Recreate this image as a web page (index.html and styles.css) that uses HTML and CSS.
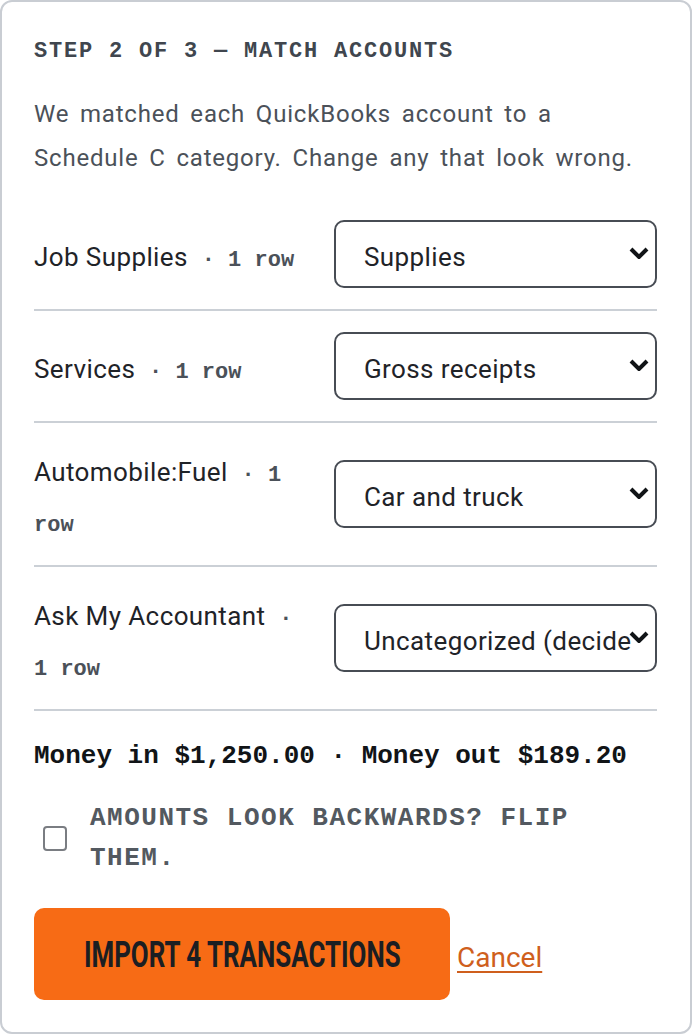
FILE: index.html
```html
<!DOCTYPE html>
<html lang="en">
<head>
<meta charset="utf-8">
<title>Match accounts</title>
<link rel="stylesheet" href="styles.css">
</head>
<body>
<main class="card">
  <h2 class="step">Step 2 of 3 — Match accounts</h2>
  <p class="intro">We matched each QuickBooks account to a Schedule C category. Change any that look wrong.</p>

  <div class="rows">
    <div class="row">
      <div class="label">Job Supplies <span class="meta dot">· </span><span class="meta">1 </span><span class="meta">row</span></div>
      <div class="pick">
        <select class="cat"><option>Supplies</option></select>
        <svg class="chev" viewBox="0 0 20 12" aria-hidden="true"><polyline points="2,2 10,10 18,2"/></svg>
      </div>
    </div>
    <div class="row">
      <div class="label">Services <span class="meta dot">· </span><span class="meta">1 </span><span class="meta">row</span></div>
      <div class="pick">
        <select class="cat"><option>Gross receipts</option></select>
        <svg class="chev" viewBox="0 0 20 12" aria-hidden="true"><polyline points="2,2 10,10 18,2"/></svg>
      </div>
    </div>
    <div class="row">
      <div class="label">Automobile:Fuel <span class="meta dot">· </span><span class="meta">1 </span><span class="meta">row</span></div>
      <div class="pick">
        <select class="cat"><option>Car and truck</option></select>
        <svg class="chev" viewBox="0 0 20 12" aria-hidden="true"><polyline points="2,2 10,10 18,2"/></svg>
      </div>
    </div>
    <div class="row">
      <div class="label">Ask My Accountant <span class="meta dot">· </span><span class="meta">1 </span><span class="meta">row</span></div>
      <div class="pick">
        <select class="cat"><option>Uncategorized (decide later)</option></select>
        <svg class="chev" viewBox="0 0 20 12" aria-hidden="true"><polyline points="2,2 10,10 18,2"/></svg>
      </div>
    </div>
  </div>

  <p class="totals">Money in $1,250.00 · Money out $189.20</p>

  <label class="flip">
    <input type="checkbox" class="box">
    <span class="flip-text">Amounts look backwards? Flip them.</span>
  </label>

  <div class="actions">
    <button class="import" type="button"><span class="import-text">Import 4 transactions</span></button>
    <a class="cancel" href="#">Cancel</a>
  </div>
</main>
</body>
</html>
```

FILE: styles.css
```css
html, body {
  margin: 0;
  padding: 0;
  background: #ffffff;
}

.card {
  box-sizing: border-box;
  width: 692px;
  min-height: 1034px;
  border: 2px solid #c9cdd3;
  border-radius: 12px;
  padding: 37px 33px 30px 32px;
  font-family: Roboto, "Liberation Sans", sans-serif;
  color: #1f2328;
  background: #ffffff;
}

.step {
  margin: 0;
  font-family: "Liberation Mono", "DejaVu Sans Mono", monospace;
  font-size: 22px;
  font-weight: 700;
  line-height: 26px;
  letter-spacing: 1.8px;
  text-transform: uppercase;
  color: #40464e;
}

.intro {
  margin: 27px 0 19px;
  font-size: 24px;
  line-height: 44px;
  letter-spacing: 0.8px;
  word-spacing: 4px;
  color: #4b5159;
}

.row {
  display: grid;
  grid-template-columns: 1fr 323px;
  column-gap: 30px;
  align-items: center;
  padding: 21px 0;
  border-bottom: 2px solid #cbd0d6;
}

.label {
  padding-top: 3px;
  margin-bottom: -3px;
  font-size: 26px;
  line-height: 50px;
  letter-spacing: 0.4px;
  color: #1f2328;
}

.meta {
  font-family: "Liberation Mono", "DejaVu Sans Mono", monospace;
  font-size: 22px;
  font-weight: 700;
  line-height: 1;
  letter-spacing: 0;
  color: #4b5159;
}

.dot {
  margin-left: 7px;
}

.pick {
  position: relative;
}

.cat {
  appearance: none;
  -webkit-appearance: none;
  display: block;
  box-sizing: border-box;
  width: 323px;
  height: 68px;
  margin: 0;
  padding: 5px 18px 0 28px;
  border: 2px solid #474c54;
  border-radius: 10px;
  background: #ffffff;
  font-family: Roboto, "Liberation Sans", sans-serif;
  font-size: 26px;
  letter-spacing: 0.4px;
  color: #1f2328;
}

.chev {
  position: absolute;
  right: 8px;
  top: 50%;
  width: 20px;
  height: 12px;
  margin-top: -7px;
  fill: none;
  stroke: #111417;
  stroke-width: 4;
  pointer-events: none;
}

.totals {
  margin: 28px 0 0;
  font-family: "Liberation Mono", "DejaVu Sans Mono", monospace;
  font-size: 26px;
  font-weight: 700;
  line-height: 34px;
  color: #111417;
}

.flip {
  display: flex;
  align-items: center;
  gap: 23px;
  margin-top: 25px;
}

.box {
  appearance: none;
  -webkit-appearance: none;
  flex: none;
  box-sizing: border-box;
  width: 24px;
  height: 25px;
  margin: 0 0 0 9px;
  border: 2px solid #7a7d82;
  border-radius: 4px;
  background: #ffffff;
}

.flip-text {
  font-family: "Liberation Mono", "DejaVu Sans Mono", monospace;
  font-size: 26px;
  font-weight: 700;
  line-height: 40px;
  letter-spacing: 1.5px;
  text-transform: uppercase;
  color: #535960;
}

.actions {
  display: flex;
  align-items: baseline;
  gap: 7px;
  margin-top: 30px;
}

.import {
  display: flex;
  align-items: center;
  justify-content: center;
  box-sizing: border-box;
  width: 416px;
  height: 92px;
  padding: 0;
  border: none;
  border-radius: 10px;
  background: #f76b15;
  color: #1b1e22;
  font-family: Roboto, "Liberation Sans", sans-serif;
  font-size: 37px;
  font-weight: 700;
  text-transform: uppercase;
  white-space: nowrap;
  overflow: hidden;
}

.import-text {
  display: inline-block;
  flex: none;
  transform: scaleX(0.7);
}

.cancel {
  font-size: 28px;
  color: #cf5f1d;
  text-decoration: underline;
  text-underline-offset: 4px;
  text-decoration-thickness: 2px;
}
```
